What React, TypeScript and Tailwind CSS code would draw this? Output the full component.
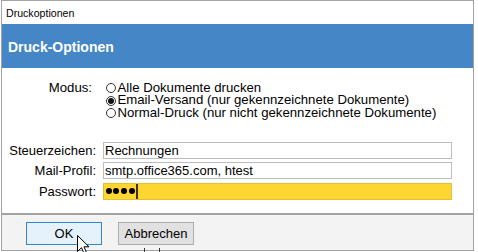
import React from "react";

function Radio({ checked, label }: { checked?: boolean; label: string }) {
  return (
    <div className="flex items-center h-[12.7px]">
      <span className="ml-[3px] mr-[1.5px] w-[10px] h-[10px] rounded-full border border-[#333333] bg-white flex items-center justify-center shrink-0">
        {checked && <span className="w-[6px] h-[6px] rounded-full bg-[#111111]" />}
      </span>
      <span className="whitespace-nowrap text-[13.2px] leading-[12.7px] text-black">{label}</span>
    </div>
  );
}

function FieldRow({ label, children }: { label: string; children: React.ReactNode }) {
  return (
    <div className="flex">
      <div className="w-[94px] h-[17px] pt-[2px] text-right text-[13px] leading-[14px] text-black whitespace-nowrap">
        {label}
      </div>
      <div className="ml-[7px]">{children}</div>
    </div>
  );
}

export default function App() {
  return (
    <div className="relative w-[478px] h-[252px] bg-white overflow-hidden font-['Liberation_Sans',Arial,sans-serif]">
      <div className="ml-[1px] w-[473px] h-[251px] border border-[#a3a3a3] flex flex-col bg-white">
        {/* title bar */}
        <div className="h-[23px] bg-white pl-[4px] pt-[6px] text-[10.6px] leading-[13px] text-black">
          Druckoptionen
        </div>
        {/* blue header */}
        <div className="h-[44px] bg-[#4587c6] flex items-center pl-[6px] pt-[2px]">
          <span className="text-white font-bold text-[14px]">Druck-Optionen</span>
        </div>
        {/* content */}
        <div className="h-[147px] bg-white border-b-2 border-[#a3a3a3] pt-[13.7px]">
          <div className="flex">
            <div className="w-[94px] pr-[4px] text-right text-[13.2px] leading-[12.7px] text-black">Modus:</div>
            <div className="ml-[7px] flex flex-col">
              <Radio label="Alle Dokumente drucken" />
              <Radio checked label="Email-Versand (nur gekennzeichnete Dokumente)" />
              <Radio label="Normal-Druck (nur nicht gekennzeichnete Dokumente)" />
            </div>
          </div>
          <div className="mt-[22.2px] flex flex-col gap-[3.5px]">
            <FieldRow label="Steuerzeichen:">
              <div className="w-[349px] h-[17px] border border-[#bdbdbd] bg-white pl-[1px] pt-[1px] text-[13px] leading-[14px] text-black whitespace-nowrap">
                Rechnungen
              </div>
            </FieldRow>
            <FieldRow label="Mail-Profil:">
              <div className="w-[349px] h-[17px] border border-[#bdbdbd] bg-white pl-[1px] pt-[1px] text-[13px] leading-[14px] text-black whitespace-nowrap">
                smtp.office365.com, htest
              </div>
            </FieldRow>
            <FieldRow label="Passwort:">
              <div className="w-[349px] h-[17px] border border-[#e3bf35] bg-[#fed632] pl-[1.5px] flex items-center">
                <span className="flex gap-[1.7px] items-center">
                  <span className="w-[6px] h-[6px] rounded-full bg-black" />
                  <span className="w-[6px] h-[6px] rounded-full bg-black" />
                  <span className="w-[6px] h-[6px] rounded-full bg-black" />
                  <span className="w-[6px] h-[6px] rounded-full bg-black" />
                </span>
                <span className="ml-[1.5px] w-[2px] h-[15px] bg-[#3d3510]" />
              </div>
            </FieldRow>
          </div>
        </div>
        {/* footer */}
        <div className="flex-1 bg-[#f3f3f3] pl-[24px] pt-[7px] flex gap-[16px]">
          <button className="w-[76px] h-[23px] border border-[#2f86d6] bg-[#e5f1fb] text-[13px] text-black flex items-center justify-center">
            OK
          </button>
          <button className="w-[76px] h-[23px] border border-[#adadad] bg-[#e1e1e1] text-[13px] text-black flex items-center justify-center">
            Abbrechen
          </button>
        </div>
      </div>
      {/* mouse pointer */}
      <svg className="absolute left-[77px] top-[235px]" width="13" height="20" viewBox="0 0 13 20">
        <path d="M0.5 0.5 L0.5 16.5 L4.5 12.7 L7.2 18.8 L9.6 17.8 L7 11.8 L12 11.8 Z" fill="white" stroke="black" strokeWidth="1" strokeLinejoin="miter" />
      </svg>
      {/* background artifacts */}
      <div className="absolute left-[144px] top-[248px] w-px h-[4px] bg-[#333333]" />
      <div className="absolute left-[159px] top-[248px] w-px h-[4px] bg-[#333333]" />
    </div>
  );
}
